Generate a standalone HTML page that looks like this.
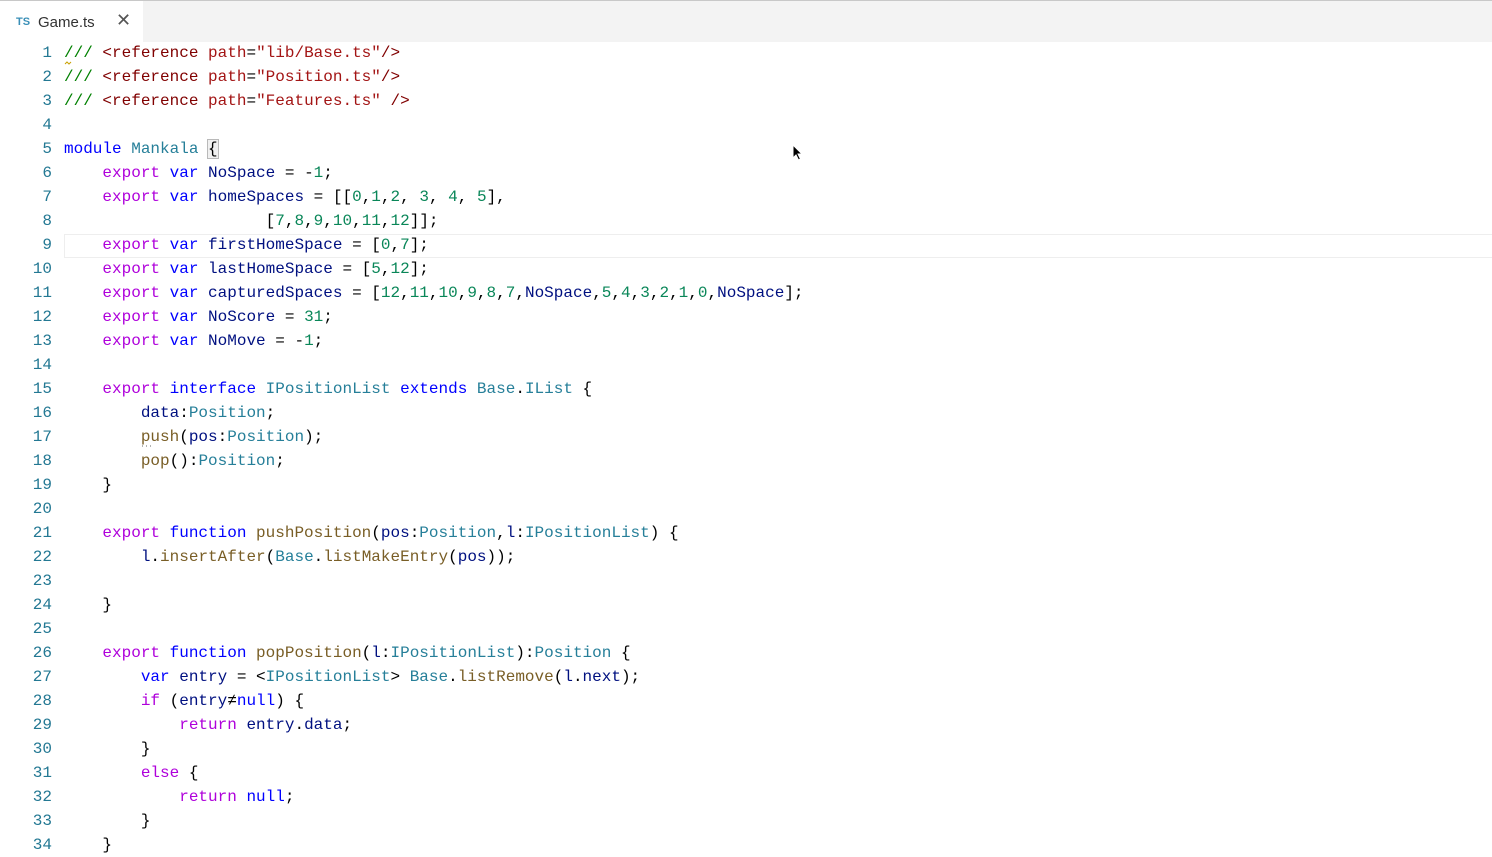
<!DOCTYPE html>
<html><head><meta charset="utf-8">
<style>
html,body{margin:0;padding:0;background:#fff;width:1492px;height:856px;overflow:hidden;}
.topline{position:absolute;left:0;top:0;width:1492px;height:1px;background:#c8c8c8;}
.tabbar{position:absolute;left:0;top:1px;width:1492px;height:41px;background:#f3f3f3;}
.tab{position:absolute;left:0;top:1px;width:143px;height:41px;background:#fff;font-family:"Liberation Sans",sans-serif;}
.tab .ts{position:absolute;left:16px;top:15px;font-size:11px;font-weight:bold;color:#3a8fb7;}
.tab .nm{position:absolute;left:38px;top:13px;font-size:15px;color:#333;}
.tab .x{position:absolute;left:116px;top:9px;font-size:18px;color:#555;}
.code{position:absolute;left:0;top:41px;font-family:"Liberation Mono",monospace;font-size:16px;line-height:24px;}
.ln{position:absolute;left:0;width:52px;text-align:right;color:#237893;}
.tx{position:absolute;left:64px;white-space:pre;color:#000;}
.cur{position:absolute;left:64px;top:234px;width:1428px;height:22px;border:1px solid #eeeeee;border-right:none;}
.k{color:#af00db}.b{color:#0000ff}.v{color:#001080}.n{color:#098658}.t{color:#267f99}
.f{color:#795e26}.s{color:#a31515}.c{color:#008000}.g{color:#800000}
.br{outline:1px solid #b9b9b9;background:#f0f0f0}
</style></head><body>
<div class="topline"></div>
<div class="tabbar"></div>
<div class="tab"><span class="ts">TS</span><span class="nm">Game.ts</span><span class="x">✕</span></div>
<div class="cur"></div>
<div class="code">
<div class="ln" style="top:0">1</div><div class="tx" style="top:0"><span class="c">///</span> <span class="g">&lt;reference</span> <span class="s">path</span>=<span class="s">"lib/Base.ts"</span><span class="g">/&gt;</span></div>
<div class="ln" style="top:24px">2</div><div class="tx" style="top:24px"><span class="c">///</span> <span class="g">&lt;reference</span> <span class="s">path</span>=<span class="s">"Position.ts"</span><span class="g">/&gt;</span></div>
<div class="ln" style="top:48px">3</div><div class="tx" style="top:48px"><span class="c">///</span> <span class="g">&lt;reference</span> <span class="s">path</span>=<span class="s">"Features.ts"</span> <span class="g">/&gt;</span></div>
<div class="ln" style="top:72px">4</div>
<div class="ln" style="top:96px">5</div><div class="tx" style="top:96px"><span class="b">module</span> <span class="t">Mankala</span> <span class="br">{</span></div>
<div class="ln" style="top:120px">6</div><div class="tx" style="top:120px">    <span class="k">export</span> <span class="b">var</span> <span class="v">NoSpace</span> = -<span class="n">1</span>;</div>
<div class="ln" style="top:144px">7</div><div class="tx" style="top:144px">    <span class="k">export</span> <span class="b">var</span> <span class="v">homeSpaces</span> = [[<span class="n">0</span>,<span class="n">1</span>,<span class="n">2</span>, <span class="n">3</span>, <span class="n">4</span>, <span class="n">5</span>],</div>
<div class="ln" style="top:168px">8</div><div class="tx" style="top:168px">                     [<span class="n">7</span>,<span class="n">8</span>,<span class="n">9</span>,<span class="n">10</span>,<span class="n">11</span>,<span class="n">12</span>]];</div>
<div class="ln" style="top:192px">9</div><div class="tx" style="top:192px">    <span class="k">export</span> <span class="b">var</span> <span class="v">firstHomeSpace</span> = [<span class="n">0</span>,<span class="n">7</span>];</div>
<div class="ln" style="top:216px">10</div><div class="tx" style="top:216px">    <span class="k">export</span> <span class="b">var</span> <span class="v">lastHomeSpace</span> = [<span class="n">5</span>,<span class="n">12</span>];</div>
<div class="ln" style="top:240px">11</div><div class="tx" style="top:240px">    <span class="k">export</span> <span class="b">var</span> <span class="v">capturedSpaces</span> = [<span class="n">12</span>,<span class="n">11</span>,<span class="n">10</span>,<span class="n">9</span>,<span class="n">8</span>,<span class="n">7</span>,<span class="v">NoSpace</span>,<span class="n">5</span>,<span class="n">4</span>,<span class="n">3</span>,<span class="n">2</span>,<span class="n">1</span>,<span class="n">0</span>,<span class="v">NoSpace</span>];</div>
<div class="ln" style="top:264px">12</div><div class="tx" style="top:264px">    <span class="k">export</span> <span class="b">var</span> <span class="v">NoScore</span> = <span class="n">31</span>;</div>
<div class="ln" style="top:288px">13</div><div class="tx" style="top:288px">    <span class="k">export</span> <span class="b">var</span> <span class="v">NoMove</span> = -<span class="n">1</span>;</div>
<div class="ln" style="top:312px">14</div>
<div class="ln" style="top:336px">15</div><div class="tx" style="top:336px">    <span class="k">export</span> <span class="b">interface</span> <span class="t">IPositionList</span> <span class="b">extends</span> <span class="t">Base</span>.<span class="t">IList</span> {</div>
<div class="ln" style="top:360px">16</div><div class="tx" style="top:360px">        <span class="v">data</span>:<span class="t">Position</span>;</div>
<div class="ln" style="top:384px">17</div><div class="tx" style="top:384px">        <span class="f">push</span>(<span class="v">pos</span>:<span class="t">Position</span>);</div>
<div class="ln" style="top:408px">18</div><div class="tx" style="top:408px">        <span class="f">pop</span>():<span class="t">Position</span>;</div>
<div class="ln" style="top:432px">19</div><div class="tx" style="top:432px">    }</div>
<div class="ln" style="top:456px">20</div>
<div class="ln" style="top:480px">21</div><div class="tx" style="top:480px">    <span class="k">export</span> <span class="b">function</span> <span class="f">pushPosition</span>(<span class="v">pos</span>:<span class="t">Position</span>,<span class="v">l</span>:<span class="t">IPositionList</span>) {</div>
<div class="ln" style="top:504px">22</div><div class="tx" style="top:504px">        <span class="v">l</span>.<span class="f">insertAfter</span>(<span class="t">Base</span>.<span class="f">listMakeEntry</span>(<span class="v">pos</span>));</div>
<div class="ln" style="top:528px">23</div>
<div class="ln" style="top:552px">24</div><div class="tx" style="top:552px">    }</div>
<div class="ln" style="top:576px">25</div>
<div class="ln" style="top:600px">26</div><div class="tx" style="top:600px">    <span class="k">export</span> <span class="b">function</span> <span class="f">popPosition</span>(<span class="v">l</span>:<span class="t">IPositionList</span>):<span class="t">Position</span> {</div>
<div class="ln" style="top:624px">27</div><div class="tx" style="top:624px">        <span class="b">var</span> <span class="v">entry</span> = &lt;<span class="t">IPositionList</span>&gt; <span class="t">Base</span>.<span class="f">listRemove</span>(<span class="v">l</span>.<span class="v">next</span>);</div>
<div class="ln" style="top:648px">28</div><div class="tx" style="top:648px">        <span class="k">if</span> (<span class="v">entry</span>≠<span class="b">null</span>) {</div>
<div class="ln" style="top:672px">29</div><div class="tx" style="top:672px">            <span class="k">return</span> <span class="v">entry</span>.<span class="v">data</span>;</div>
<div class="ln" style="top:696px">30</div><div class="tx" style="top:696px">        }</div>
<div class="ln" style="top:720px">31</div><div class="tx" style="top:720px">        <span class="k">else</span> {</div>
<div class="ln" style="top:744px">32</div><div class="tx" style="top:744px">            <span class="k">return</span> <span class="b">null</span>;</div>
<div class="ln" style="top:768px">33</div><div class="tx" style="top:768px">        }</div>
<div class="ln" style="top:792px">34</div><div class="tx" style="top:792px">    }</div>
</div>
<svg style="position:absolute;left:64px;top:60px" width="12" height="6"><path d="M1 4 L3 2 L5 4 L7 2" stroke="#c9a000" fill="none" stroke-width="1"/></svg>
<svg style="position:absolute;left:141px;top:444px" width="14" height="4"><path d="M1 2h1M5 2h1M9 2h1" stroke="#666" stroke-width="1"/></svg>
<svg style="position:absolute;left:792px;top:144px" width="12" height="18"><path d="M1 1 L1 14 L4 11 L6.5 16 L8.5 15 L6 10 L10 10 Z" fill="#000" stroke="#fff" stroke-width="1"/></svg>
</body></html>
